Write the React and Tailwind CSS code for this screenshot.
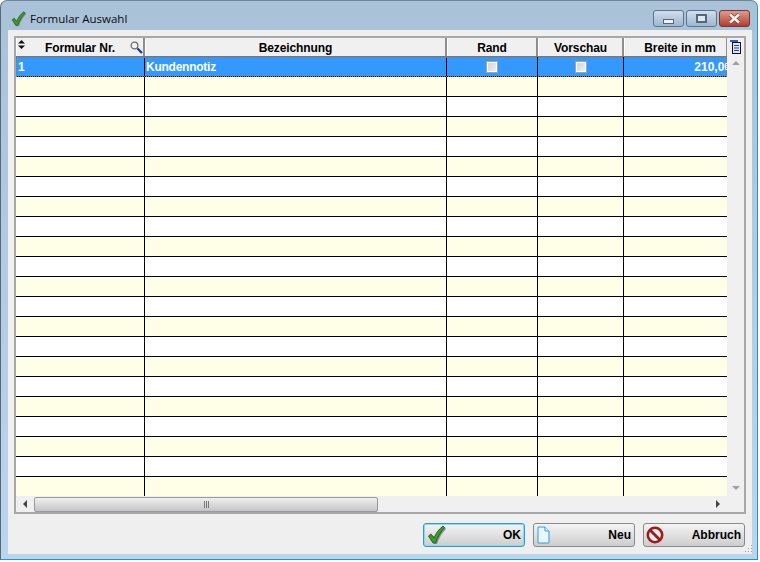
import React from "react";

const font = { fontFamily: '"Liberation Sans", Arial, sans-serif' };
const cols = ["w-[129px]", "w-[302px]", "w-[91px]", "w-[86px]", "flex-1"];

function Check({ size = 20, className = "" }) {
  return (
    <svg width={size} height={size} viewBox="0 0 20 20" className={className}>
      <path d="M3.5 12.5 L7.5 19 L10 19 C12 13 15 8 19 4 L18 2 C14 5 11 9 8.5 14 L6 10.5 Z" fill="#8a8f98" />
      <path d="M1.5 11 L4 9 L7 13 C9 8 12 4 16 1 L17.5 2.5 C13.5 7 10.5 12 8.5 18 L6 18 Z" fill="#3f9a2c" stroke="#1e5a16" strokeWidth="0.9" strokeLinejoin="round" />
    </svg>
  );
}

function Box() {
  return (
    <div className="w-[12px] h-[12px] border border-[#a4a4a4] bg-white p-[1px]">
      <div className="w-full h-full bg-gradient-to-br from-[#d0d4da] to-[#f0f0f0]" />
    </div>
  );
}

function Row({ i, selected }) {
  const bg = selected ? "bg-[#3399ff] outline-1 outline-dotted -outline-offset-1 outline-[#8a7a60]" : i % 2 === 1 ? "bg-[#ffffe7]" : "bg-white";
  const last = i === 21;
  const h = last ? "h-[19px]" : "h-[20px]";
  const line = last ? "" : "border-b border-black";
  return (
    <div className={`flex ${h} ${bg} ${line} text-white text-[12px] font-bold tracking-[-0.25px]`}>
      <div className={`${cols[0]} border-r border-black flex items-center pl-[2px] pt-px`}>{selected ? "1" : ""}</div>
      <div className={`${cols[1]} border-r border-black flex items-center pl-[1px] pt-px`}>{selected ? "Kundennotiz" : ""}</div>
      <div className={`${cols[2]} border-r border-black flex items-center justify-center pt-px`}>{selected ? <Box /> : null}</div>
      <div className={`${cols[3]} border-r border-black flex items-center justify-center pt-px`}>{selected ? <Box /> : null}</div>
      <div className={`${cols[4]} overflow-hidden flex items-center justify-end whitespace-nowrap pt-px`}>
        {selected ? <span className="mr-[-4px] tracking-normal">210,00</span> : null}
      </div>
    </div>
  );
}

function Head({ className = "", children }) {
  return (
    <div className={`${className} relative h-[18px] pt-px bg-[#f0f0f0] border-r-2 border-r-[#8e8e8e] border-l border-l-white flex items-center justify-center text-[12px] font-bold text-black tracking-[-0.1px]`}>
      {children}
    </div>
  );
}

function WinBtn({ className, children }) {
  return (
    <div className={`w-[31px] h-[17px] rounded-[3px] border flex items-center justify-center ${className}`}>
      {children}
    </div>
  );
}

function Btn({ focus, icon, label }) {
  return (
    <div className={`w-[102px] h-[24px] rounded-[3px] border ${focus ? "border-[#2a9fd6] ring-1 ring-inset ring-[#8fd6f2]" : "border-[#8a8a8a]"} bg-gradient-to-b from-[#f4f4f4] to-[#cdcdcd] flex items-center justify-between pl-[1px] pr-[3px] text-[12px] font-bold text-black`}>
      {icon}
      <span>{label}</span>
    </div>
  );
}

export default function App() {
  return (
    <div className="w-[760px] h-[562px] bg-white overflow-hidden">
      <div style={font} className="relative w-[758px] h-[560px] overflow-hidden flex flex-col bg-gradient-to-b from-[#a9c2d8] to-[#bcd5ee] border border-l-[#55697a] border-t-[#6f8494] border-r-[#1a9cbc] border-b-[#1a9cbc] rounded-t-[7px]">
        <div className="h-[29px] flex items-center justify-between pt-[6px] pl-[10px] pr-[7px] shrink-0">
          <div className="flex items-center gap-[3px] text-[12px] text-[#0c0c0c]">
            <Check size={16} />
            <span style={{ fontFamily: '"Open Sans", sans-serif' }} className="text-[11.5px]">Formular Auswahl</span>
          </div>
          <div className="flex gap-[2px]">
            <WinBtn className="border-[#5f7488] bg-gradient-to-b from-[#cfdeec] to-[#9db8d0]">
              <div className="w-[11px] h-[5px] mt-[6px] bg-[#eef2f6] border border-[#56677a]" />
            </WinBtn>
            <WinBtn className="border-[#5f7488] bg-gradient-to-b from-[#cfdeec] to-[#9db8d0]">
              <div className="w-[11px] h-[9px] bg-[#dfe8f0] border-2 border-[#56677a]" />
            </WinBtn>
            <WinBtn className="border-[#6e3a3a] bg-gradient-to-b from-[#e09a8c] to-[#b63a2c]">
              <svg width="15" height="11" viewBox="0 0 15 11">
                <path d="M3 1.5 L12 9.5 M12 1.5 L3 9.5" stroke="#5a4a4a" strokeWidth="4" />
                <path d="M3 1.5 L12 9.5 M12 1.5 L3 9.5" stroke="#f4f0ee" strokeWidth="2.6" />
              </svg>
            </WinBtn>
          </div>
        </div>

        <div className="ml-[7px] w-[744px] h-[524px] bg-[#efefef] flex flex-col px-[6px] pt-[6px] shrink-0">
          <div className="h-[478px] border-2 border-[#a8a8a8] bg-[#f0f0f0] flex flex-col">
            <div className="flex h-[458px] shrink-0">
              <div className="w-[711px] flex flex-col">
                <div className="flex h-[18px] shrink-0">
                  <Head className={cols[0]}>
                    <svg width="7" height="9" viewBox="0 0 7 9" className="absolute left-[1px] top-[2px]">
                      <path d="M3.5 0 L7 3.5 H0 Z M3.5 9 L0 5.5 H7 Z" fill="#111" />
                    </svg>
                    <span>Formular Nr.</span>
                    <svg width="13" height="13" viewBox="0 0 13 13" className="absolute right-[0px] top-[3px]">
                      <circle cx="4.5" cy="4.5" r="3.4" fill="#eef0f2" stroke="#6e6e6e" strokeWidth="1.3" />
                      <path d="M7.5 7.5 L12 12" stroke="#1a2fb0" strokeWidth="2.2" />
                    </svg>
                  </Head>
                  <Head className={cols[1]}>Bezeichnung</Head>
                  <Head className={cols[2]}>Rand</Head>
                  <Head className={cols[3]}>Vorschau</Head>
                  <Head className={`${cols[4]} !border-r-[#8e8e8e] !border-r`}>
                    <span className="ml-[9px]">Breite in mm</span>
                  </Head>
                </div>
                <div className="h-px bg-[#777] shrink-0" />
                {Array.from({ length: 22 }).map((_, i) => (
                  <Row key={i} i={i} selected={i === 0} />
                ))}
              </div>
              <div className="flex-1 flex flex-col items-center bg-[#f0f0f0]">
                <svg width="13" height="15" viewBox="0 0 13 15" className="mt-[1px] shrink-0">
                  <path d="M1 1 H9 V3 H1 Z" fill="#2f5fc4" />
                  <rect x="3.5" y="3.5" width="8" height="11" fill="#dfe6f5" stroke="#111" />
                  <path d="M5 6.5h5M5 9h5M5 11.5h5" stroke="#2a3f90" />
                </svg>
                <div className="mt-[7px] w-0 h-0 border-l-[4px] border-r-[4px] border-b-[4px] border-l-transparent border-r-transparent border-b-[#a0a0a0]" />
                <div className="flex-1" />
                <div className="mb-[6px] w-0 h-0 border-l-[4px] border-r-[4px] border-t-[4px] border-l-transparent border-r-transparent border-t-[#a0a0a0]" />
              </div>
            </div>
            <div className="h-[16px] flex items-center">
              <div className="w-[18px] flex justify-center">
                <div className="w-0 h-0 border-t-[4px] border-b-[4px] border-r-[4px] border-t-transparent border-b-transparent border-r-[#444]" />
              </div>
              <div className="w-[344px] h-[15px] rounded-[2px] border border-[#9a9a9a] bg-gradient-to-b from-[#f0f0f0] to-[#c4c4c4] flex items-center justify-center">
                <div className="flex gap-[1px]">
                  <div className="w-px h-[7px] bg-[#777]" />
                  <div className="w-px h-[7px] bg-[#777]" />
                  <div className="w-px h-[7px] bg-[#777]" />
                </div>
              </div>
              <div className="flex-1" />
              <div className="w-0 h-0 mr-[24px] border-t-[4px] border-b-[4px] border-l-[4px] border-t-transparent border-b-transparent border-l-[#444]" />
            </div>
          </div>
          <div className="flex justify-end gap-[8px] mt-[9px] mr-[1px]">
            <Btn focus label="OK" icon={<Check size={20} className="ml-[2px]" />} />
            <Btn
              label="Neu"
              icon={
                <svg width="13" height="18" viewBox="0 0 13 18" className="ml-[2px]">
                  <path d="M1 1 H8 L12 5 V17 H1 Z" fill="#e8f6ff" stroke="#2f9fe0" />
                  <path d="M8 1 V5 H12" fill="#fff" stroke="#2f9fe0" />
                </svg>
              }
            />
            <Btn
              label="Abbruch"
              icon={
                <svg width="18" height="18" viewBox="0 0 18 18" className="ml-[1px]">
                  <circle cx="9" cy="9" r="7.2" fill="#f4f4f4" stroke="#a01a1a" strokeWidth="2.6" />
                  <path d="M4 4 L14 14" stroke="#a01a1a" strokeWidth="2.8" />
                </svg>
              }
            />
          </div>
        </div>
        <svg width="8" height="8" viewBox="0 0 8 8" className="absolute left-[744px] top-[544px]">
          <path d="M6 0h1v1H6zM3 3h1v1H3zM6 3h1v1H6zM0 6h1v1H0zM3 6h1v1H3zM6 6h1v1H6z" fill="#9aa0a6" />
        </svg>
      </div>
    </div>
  );
}
